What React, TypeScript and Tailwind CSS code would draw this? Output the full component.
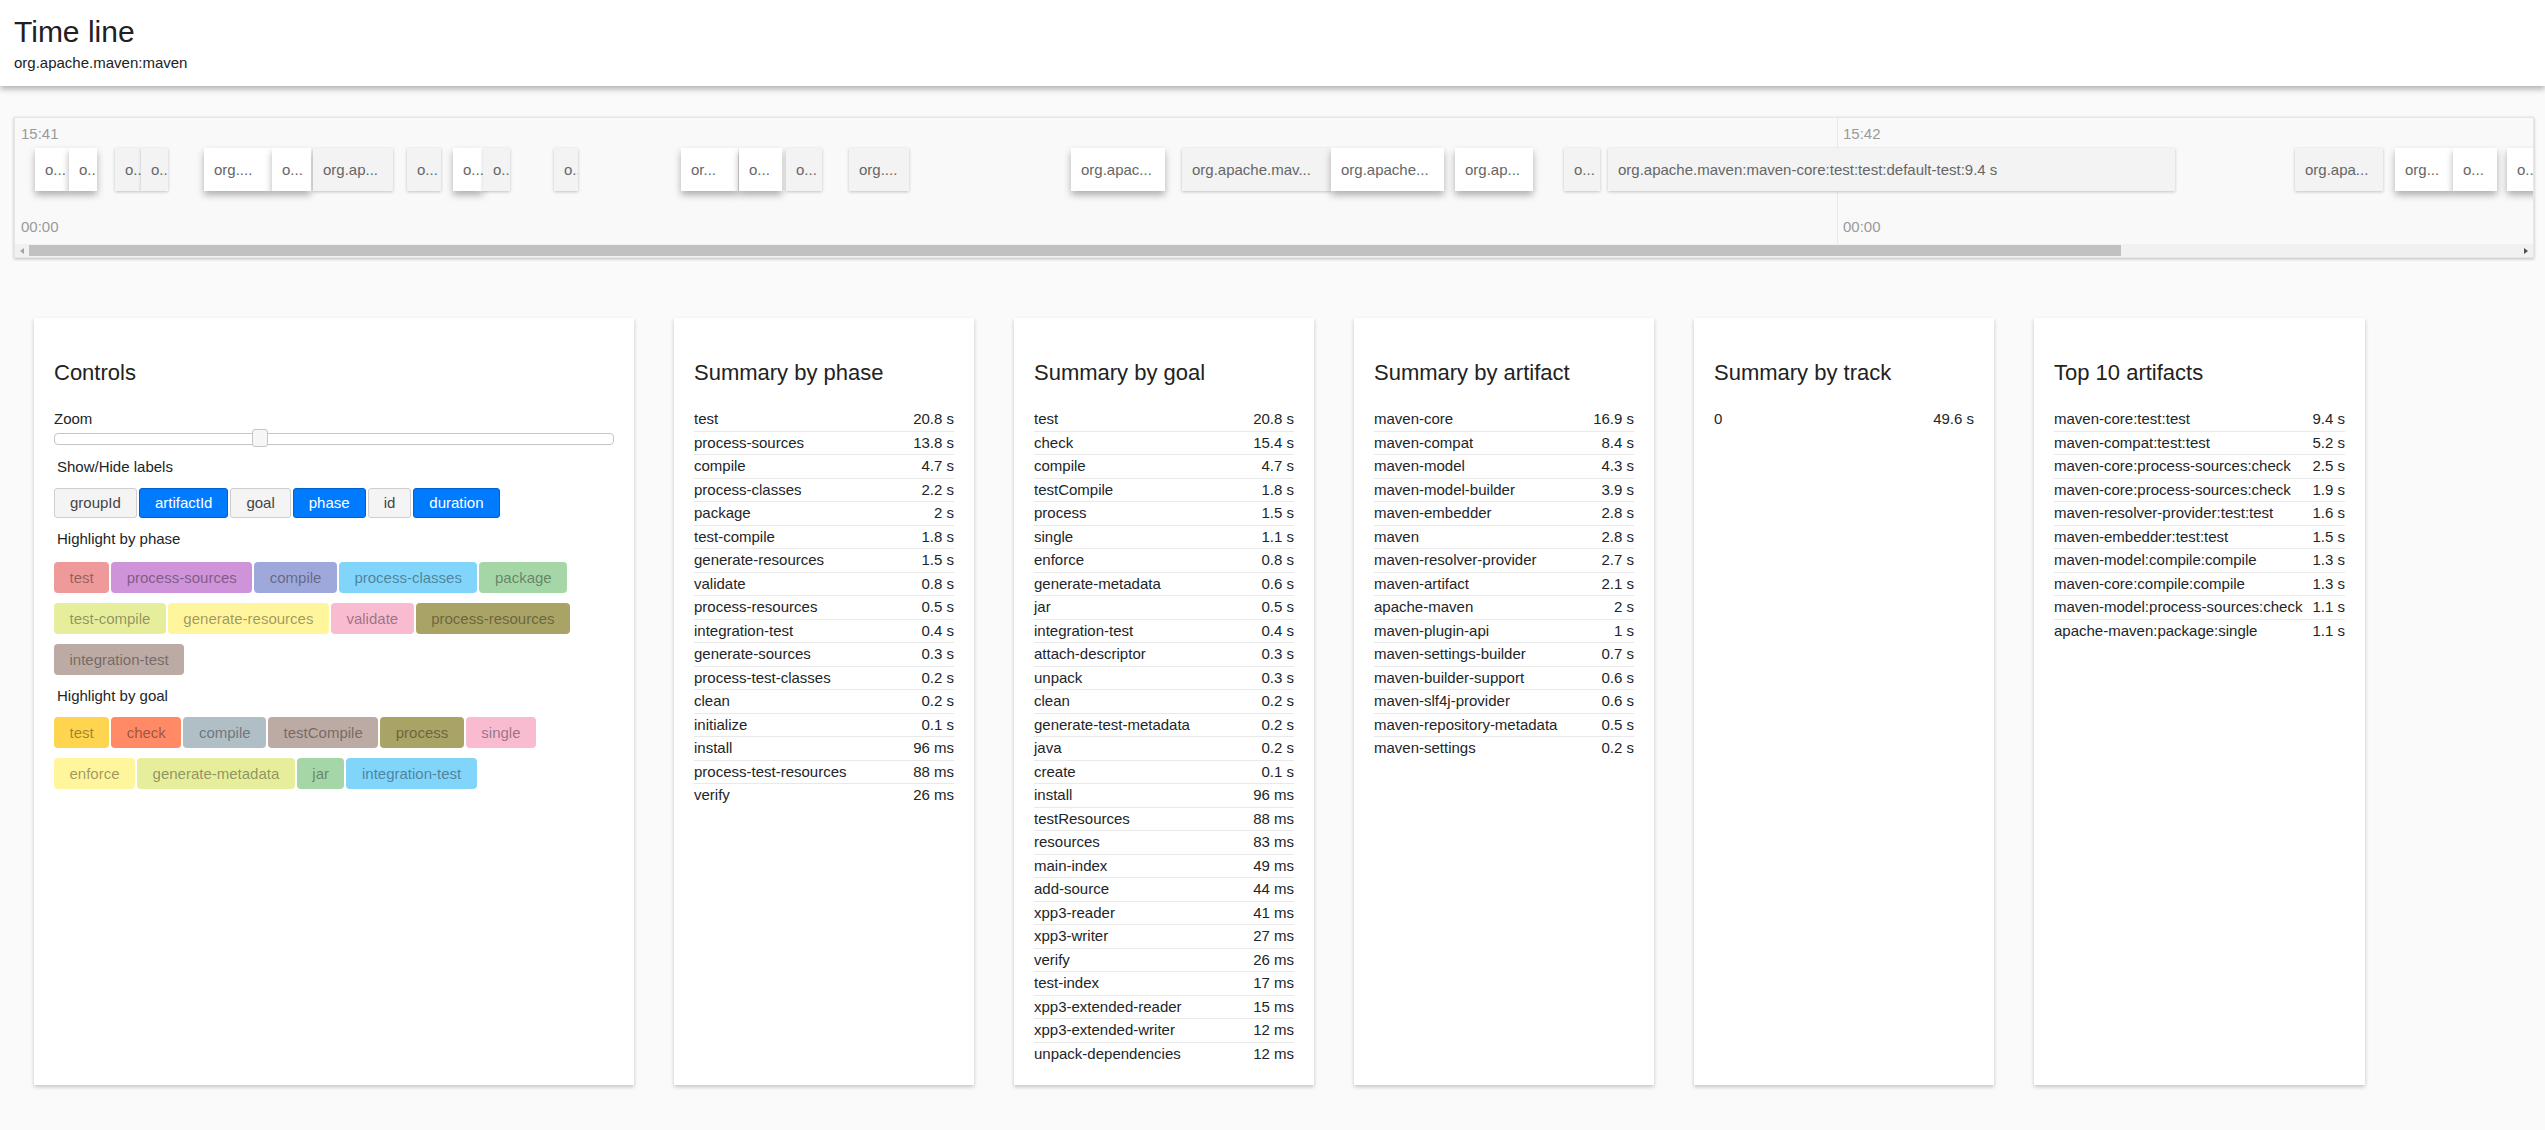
import React from 'react';

// ─── data ─────────────────────────────────────────────────────────────────────
type Row = [string, string];

const byPhase: Row[] = [
  ['test', '20.8 s'], ['process-sources', '13.8 s'], ['compile', '4.7 s'], ['process-classes', '2.2 s'],
  ['package', '2 s'], ['test-compile', '1.8 s'], ['generate-resources', '1.5 s'], ['validate', '0.8 s'],
  ['process-resources', '0.5 s'], ['integration-test', '0.4 s'], ['generate-sources', '0.3 s'],
  ['process-test-classes', '0.2 s'], ['clean', '0.2 s'], ['initialize', '0.1 s'], ['install', '96 ms'],
  ['process-test-resources', '88 ms'], ['verify', '26 ms'],
];

const byGoal: Row[] = [
  ['test', '20.8 s'], ['check', '15.4 s'], ['compile', '4.7 s'], ['testCompile', '1.8 s'], ['process', '1.5 s'],
  ['single', '1.1 s'], ['enforce', '0.8 s'], ['generate-metadata', '0.6 s'], ['jar', '0.5 s'],
  ['integration-test', '0.4 s'], ['attach-descriptor', '0.3 s'], ['unpack', '0.3 s'], ['clean', '0.2 s'],
  ['generate-test-metadata', '0.2 s'], ['java', '0.2 s'], ['create', '0.1 s'], ['install', '96 ms'],
  ['testResources', '88 ms'], ['resources', '83 ms'], ['main-index', '49 ms'], ['add-source', '44 ms'],
  ['xpp3-reader', '41 ms'], ['xpp3-writer', '27 ms'], ['verify', '26 ms'], ['test-index', '17 ms'],
  ['xpp3-extended-reader', '15 ms'], ['xpp3-extended-writer', '12 ms'], ['unpack-dependencies', '12 ms'],
];

const byArtifact: Row[] = [
  ['maven-core', '16.9 s'], ['maven-compat', '8.4 s'], ['maven-model', '4.3 s'], ['maven-model-builder', '3.9 s'],
  ['maven-embedder', '2.8 s'], ['maven', '2.8 s'], ['maven-resolver-provider', '2.7 s'], ['maven-artifact', '2.1 s'],
  ['apache-maven', '2 s'], ['maven-plugin-api', '1 s'], ['maven-settings-builder', '0.7 s'],
  ['maven-builder-support', '0.6 s'], ['maven-slf4j-provider', '0.6 s'], ['maven-repository-metadata', '0.5 s'],
  ['maven-settings', '0.2 s'],
];

const byTrack: Row[] = [['0', '49.6 s']];

const top10: Row[] = [
  ['maven-core:test:test', '9.4 s'], ['maven-compat:test:test', '5.2 s'],
  ['maven-core:process-sources:check', '2.5 s'], ['maven-core:process-sources:check', '1.9 s'],
  ['maven-resolver-provider:test:test', '1.6 s'], ['maven-embedder:test:test', '1.5 s'],
  ['maven-model:compile:compile', '1.3 s'], ['maven-core:compile:compile', '1.3 s'],
  ['maven-model:process-sources:check', '1.1 s'], ['apache-maven:package:single', '1.1 s'],
];

const labels: [string, boolean][] = [
  ['groupId', false], ['artifactId', true], ['goal', false], ['phase', true], ['id', false], ['duration', true],
];

const phaseChips: [string, string][] = [
  ['test', 'bg-[#ef9a9a]'], ['process-sources', 'bg-[#ce93d8]'], ['compile', 'bg-[#9fa8da]'],
  ['process-classes', 'bg-[#81d4fa]'], ['package', 'bg-[#a5d6a7]'], ['test-compile', 'bg-[#e6ee9c]'],
  ['generate-resources', 'bg-[#fff59d]'], ['validate', 'bg-[#f8bbd0]'], ['process-resources', 'bg-[#aaa366]'],
  ['integration-test', 'bg-[#bcaaa4]'],
];

const goalChips: [string, string][] = [
  ['test', 'bg-[#ffd54f]'], ['check', 'bg-[#ff8a65]'], ['compile', 'bg-[#b0bec5]'], ['testCompile', 'bg-[#bcaaa4]'],
  ['process', 'bg-[#aaa366]'], ['single', 'bg-[#f8bbd0]'], ['enforce', 'bg-[#fff59d]'],
  ['generate-metadata', 'bg-[#e6ee9c]'], ['jar', 'bg-[#a5d6a7]'], ['integration-test', 'bg-[#81d4fa]'],
];

// [start x, end x, label, raised]
const mojos: [number, number, string, boolean][] = [
  [35, 69, 'o...', true], [69, 97, 'o...', true], [115, 141, 'o...', false], [141, 168, 'o...', false],
  [204, 272, 'org....', true], [272, 311, 'o...', true], [313, 393, 'org.ap...', false], [407, 441, 'o...', false],
  [453, 483, 'o...', true], [483, 510, 'o...', false], [554, 578, 'o...', false], [681, 738, 'or...', true],
  [739, 782, 'o...', true], [786, 822, 'o...', false], [849, 909, 'org....', false],
  [1071, 1165, 'org.apac...', true], [1182, 1331, 'org.apache.mav...', false], [1331, 1444, 'org.apache...', true],
  [1455, 1533, 'org.ap...', true], [1564, 1600, 'o...', false],
  [1608, 2175, 'org.apache.maven:maven-core:test:test:default-test:9.4 s', false],
  [2295, 2383, 'org.apa...', false], [2395, 2453, 'org...', true], [2453, 2497, 'o...', true], [2507, 2545, 'o...', true],
];

// ─── pieces ───────────────────────────────────────────────────────────────────
function Card({ title, className, children }: { title: string; className: string; children: React.ReactNode }) {
  return (
    <div className={`bg-white p-5 shadow-[0_2px_4px_rgba(0,0,0,0.22)] ${className}`}>
      <h2 className="mt-[22px] mb-[22px] text-[22px] leading-[26px] text-[#222]">{title}</h2>
      {children}
    </div>
  );
}

function Table({ rows, gap }: { rows: Row[]; gap?: boolean }) {
  return (
    <div className="divide-y divide-[#e9e9e9]">
      {rows.map(([k, v], i) => (
        <div key={i} className="flex justify-between leading-[22.5px]">
          <span className={gap ? 'pr-[10px]' : ''}>{k}</span>
          <span>{v}</span>
        </div>
      ))}
    </div>
  );
}

function Chips({ items }: { items: [string, string][] }) {
  return (
    <div className="flex flex-wrap gap-x-[2px] gap-y-[10px]">
      {items.map(([name, bg]) => (
        <span key={name} className={`${bg} h-[31px] rounded-[4px] px-[15.5px] leading-[31px] text-black/40`}>
          {name}
        </span>
      ))}
    </div>
  );
}

function Timeline() {
  return (
    <div className="mt-[31px] ml-[14px] mr-[11px] border border-[#e6e6e6] bg-[#f9f9f9] shadow-[0_1px_3px_rgba(0,0,0,0.25)]">
      <div className="relative h-[126px] overflow-hidden">
        <div className="absolute left-[1822px] top-0 h-full w-px bg-[#e8e8e8]" />
        <span className="absolute left-[6px] top-[7px] leading-[18px] text-[#9a9a9a]">15:41</span>
        <span className="absolute left-[1828px] top-[7px] leading-[18px] text-[#9a9a9a]">15:42</span>
        <span className="absolute left-[6px] top-[100px] leading-[18px] text-[#9a9a9a]">00:00</span>
        <span className="absolute left-[1828px] top-[100px] leading-[18px] text-[#9a9a9a]">00:00</span>
        {mojos.map(([a, b, label, raised], i) => (
          <div
            key={i}
            style={{ left: a - 15, width: b - a }}
            className={`absolute top-[30px] h-[43px] overflow-hidden whitespace-nowrap pl-[10px] leading-[43px] text-[#666] ${
              raised
                ? 'bg-white shadow-[0_4px_7px_rgba(0,0,0,0.3)]'
                : 'bg-[#f3f3f3] shadow-[0_1px_3px_rgba(0,0,0,0.22)]'
            }`}
          >
            {label}
          </div>
        ))}
      </div>
      {/* horizontal scrollbar */}
      <div className="flex h-[13px] items-center bg-[#f1f1f1]">
        <div className="flex w-[14px] justify-center">
          <div className="h-0 w-0 border-y-[3.5px] border-r-[4px] border-y-transparent border-r-[#a3a3a3]" />
        </div>
        <div className="h-[11px] w-[2092px] bg-[#c1c1c1]" />
        <div className="flex-1" />
        <div className="flex w-[14px] justify-center">
          <div className="h-0 w-0 border-y-[3.5px] border-l-[4px] border-y-transparent border-l-[#505050]" />
        </div>
      </div>
    </div>
  );
}

// ─── page ─────────────────────────────────────────────────────────────────────
export default function App() {
  return (
    <div className="min-h-[1130px] bg-[#fafafa] pb-[46px] font-['Liberation_Sans',Arial,sans-serif] text-[15px] text-[#212529]">
      <header className="h-[86px] bg-white pl-[14px] pt-[15px] shadow-[0_3px_6px_rgba(0,0,0,0.3)]">
        <h1 className="text-[30px] leading-[33px] text-[#212121]">Time line</h1>
        <div className="mt-[6px] leading-[18px] text-[#222]">org.apache.maven:maven</div>
      </header>

      <Timeline />

      <div className="mt-[60px] flex items-stretch gap-10 pl-[34px]">
        <Card title="Controls" className="w-[600px]">
          <div className="leading-[22.5px]">Zoom</div>
          <div className="relative mt-[2px] h-[12px] rounded-[4px] border border-[#c5c5c5] bg-white">
            <div className="absolute left-[197px] top-[-5px] h-[18px] w-[16px] rounded-[3px] border border-[#c5c5c5] bg-[#f6f6f6]" />
          </div>
          <div className="mt-[11px] pl-[3px] leading-[22.5px]">Show/Hide labels</div>
          <div className="mt-[9.5px] flex gap-[2px]">
            {labels.map(([name, on]) => (
              <span
                key={name}
                className={`h-[30px] rounded-[3px] border px-[15px] leading-[28px] ${
                  on ? 'border-[#0062cc] bg-[#007bff] text-white' : 'border-[#cfcfcf] bg-[#f4f4f4] text-[#444]'
                }`}
              >
                {name}
              </span>
            ))}
          </div>
          <div className="mt-[10px] pl-[3px] leading-[22.5px]">Highlight by phase</div>
          <div className="mt-[11.5px]">
            <Chips items={phaseChips} />
          </div>
          <div className="mt-[10px] pl-[3px] leading-[22.5px]">Highlight by goal</div>
          <div className="mt-[9.5px]">
            <Chips items={goalChips} />
          </div>
        </Card>

        <Card title="Summary by phase" className="w-[300px]">
          <Table rows={byPhase} />
        </Card>
        <Card title="Summary by goal" className="w-[300px]">
          <Table rows={byGoal} />
        </Card>
        <Card title="Summary by artifact" className="w-[300px]">
          <Table rows={byArtifact} />
        </Card>
        <Card title="Summary by track" className="w-[300px]">
          <Table rows={byTrack} />
        </Card>
        <Card title="Top 10 artifacts" className="w-fit">
          <Table rows={top10} gap />
        </Card>
      </div>
    </div>
  );
}
